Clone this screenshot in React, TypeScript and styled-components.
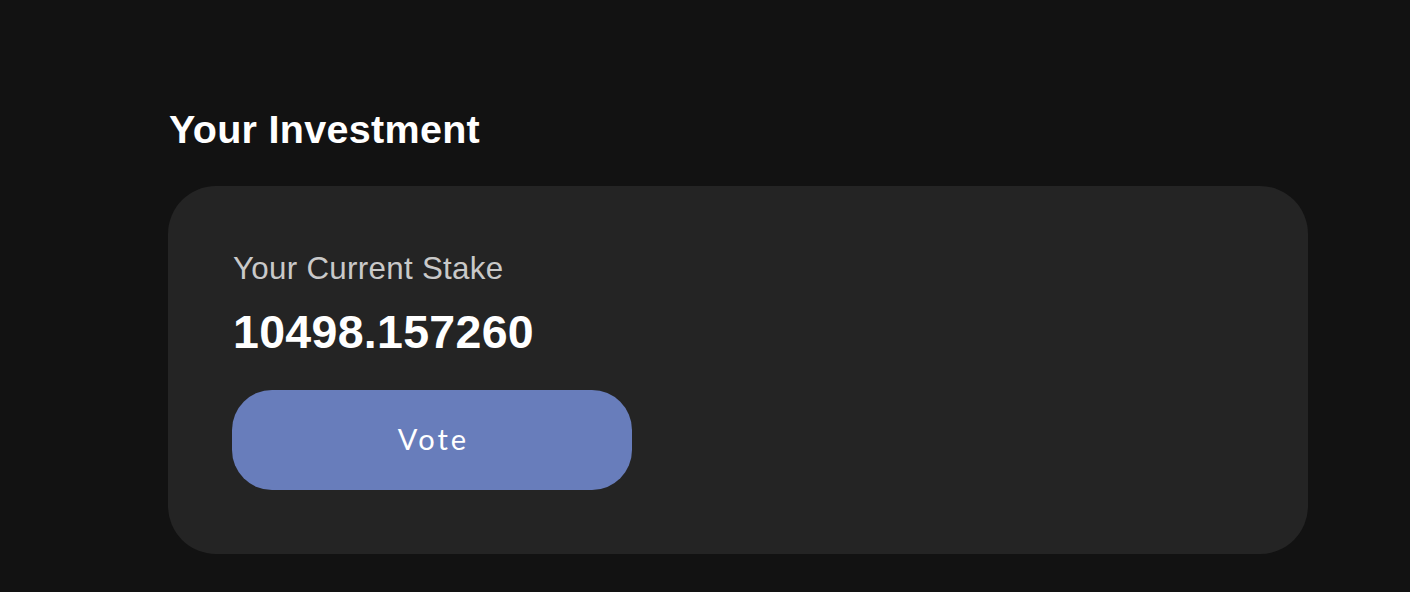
import { FC } from "react";
import styled, { createGlobalStyle } from "styled-components";

const GlobalStyle = createGlobalStyle`
  html, body {
    margin: 0;
    padding: 0;
    background: #121212;
  }
  body {
    font-family: "Liberation Sans", Arial, sans-serif;
  }
`;

const App: FC = () => {
  return (
    <>
      <GlobalStyle />
      <StyledPage>
        <StyledTitle>Your Investment</StyledTitle>
        <StyledCard>
          <StyledLabel>Your Current Stake</StyledLabel>
          <StyledAmount>10498.157260</StyledAmount>
          <StyledVoteButton type="button">Vote</StyledVoteButton>
        </StyledCard>
      </StyledPage>
    </>
  );
};

const StyledPage = styled.main`
  width: 1140px;
  min-height: 592px;
  box-sizing: border-box;
  padding-top: 110px;
  margin-left: 168px;
  display: flex;
  flex-direction: column;
`;

const StyledTitle = styled.h2`
  margin: 0 0 36px 1px;
  font-size: 39.5px;
  line-height: 1;
  font-weight: 700;
  letter-spacing: 0.3px;
  color: #ffffff;
`;

const StyledCard = styled.section`
  background: #242424;
  border-radius: 48px;
  padding: 67px 64px 64px 64px;
  display: flex;
  flex-direction: column;
  align-items: flex-start;
`;

const StyledLabel = styled.div`
  margin-left: 1px;
  font-size: 31.3px;
  line-height: 1;
  letter-spacing: 0.3px;
  color: #c9c9c9;
`;

const StyledAmount = styled.div`
  margin-top: 25px;
  margin-left: 1px;
  font-size: 46.5px;
  line-height: 1;
  font-weight: 700;
  letter-spacing: 0.3px;
  color: #ffffff;
`;

const StyledVoteButton = styled.button`
  margin-top: 35px;
  width: 400px;
  height: 100px;
  border: none;
  border-radius: 40px;
  background: #687dbb;
  color: #ffffff;
  font-family: "Lato", "Noto Sans", sans-serif;
  font-size: 29px;
  letter-spacing: 3px;
  padding: 0 0 3px 3px;
  display: flex;
  align-items: center;
  justify-content: center;
  cursor: pointer;
`;

export default App;
